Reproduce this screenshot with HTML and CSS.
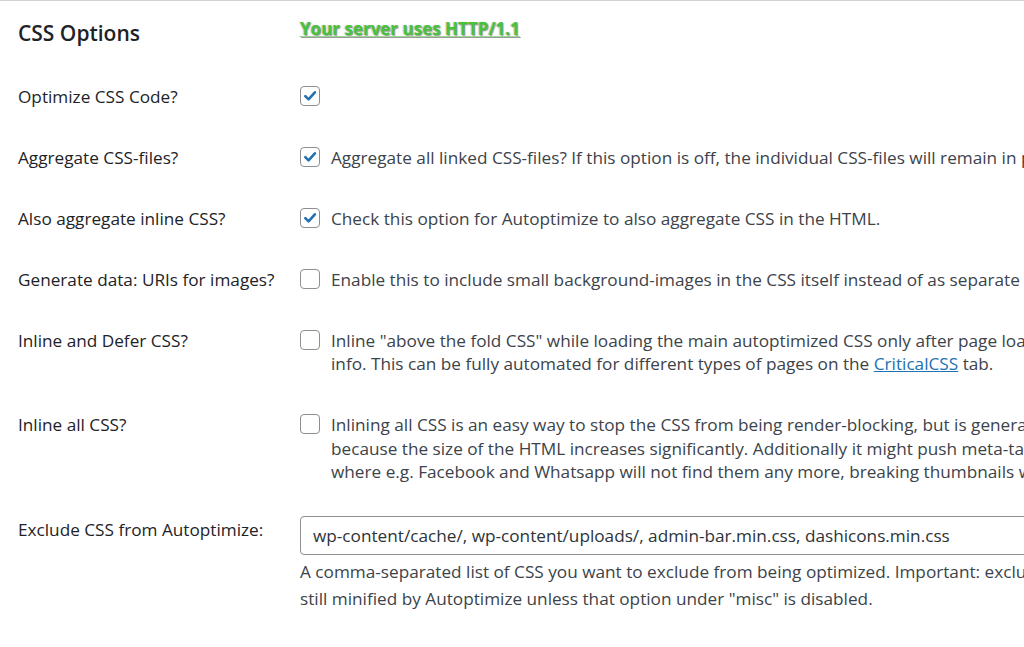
FILE: index.html
```html
<!DOCTYPE html>
<html lang="en">
<head>
<meta charset="utf-8">
<title>CSS Options</title>
<link rel="stylesheet" href="styles.css">
</head>
<body>
<div class="page">
  <div class="head-row">
    <h2 class="title">CSS Options</h2>
    <div class="proto"><span class="proto-link">Your server uses HTTP/1.1</span></div>
  </div>

  <div class="row">
    <div class="label">Optimize CSS Code?</div>
    <div class="field">
      <span class="cb checked"><svg viewBox="0 0 20 20"><path d="M4.8 10.2 8.4 13.8 15.4 5.9"/></svg></span>
    </div>
  </div>

  <div class="row">
    <div class="label">Aggregate CSS-files?</div>
    <div class="field">
      <span class="cb checked"><svg viewBox="0 0 20 20"><path d="M4.8 10.2 8.4 13.8 15.4 5.9"/></svg></span>
      <div class="text">Aggregate all linked CSS-files? If this option is off, the individual CSS-files will remain in place but will be minified.</div>
    </div>
  </div>

  <div class="row">
    <div class="label">Also aggregate inline CSS?</div>
    <div class="field">
      <span class="cb checked"><svg viewBox="0 0 20 20"><path d="M4.8 10.2 8.4 13.8 15.4 5.9"/></svg></span>
      <div class="text">Check this option for Autoptimize to also aggregate CSS in the HTML.</div>
    </div>
  </div>

  <div class="row">
    <div class="label">Generate data: URIs for images?</div>
    <div class="field">
      <span class="cb"></span>
      <div class="text">Enable this to include small background-images in the CSS itself instead of as separate downloads.</div>
    </div>
  </div>

  <div class="row">
    <div class="label">Inline and Defer CSS?</div>
    <div class="field">
      <span class="cb"></span>
      <div class="text">Inline "above the fold CSS" while loading the main autoptimized CSS only after page load. Check the FAQ for more<br>info. This can be fully automated for different types of pages on the <a class="link" href="#">CriticalCSS</a> tab.</div>
    </div>
  </div>

  <div class="row">
    <div class="label">Inline all CSS?</div>
    <div class="field">
      <span class="cb"></span>
      <div class="text">Inlining all CSS is an easy way to stop the CSS from being render-blocking, but is generally not recommended<br>because the size of the HTML increases significantly. Additionally it might push meta-tags down to a position<br>where e.g. Facebook and Whatsapp will not find them any more, breaking thumbnails when sharing.</div>
    </div>
  </div>

  <div class="row row-input">
    <div class="label">Exclude CSS from Autoptimize:</div>
    <div class="field-col">
      <div class="input">wp-content/cache/, wp-content/uploads/, admin-bar.min.css, dashicons.min.css</div>
      <p class="desc">A comma-separated list of CSS you want to exclude from being optimized. Important: excluded CSS files are<br>still minified by Autoptimize unless that option under "misc" is disabled.</p>
    </div>
  </div>
</div>
</body>
</html>
```

FILE: styles.css
```css
html, body {
  margin: 0;
  padding: 0;
  background: #ffffff;
  overflow: hidden;
}

body {
  font-family: "Open Sans", "Noto Sans", sans-serif;
  font-size: 17.2px;
  color: #3c434a;
  width: 1024px;
  height: 647px;
}

.page {
  border-top: 1px solid #d2d2d2;
  padding-left: 18px;
  width: 1600px;
}

.head-row {
  display: grid;
  grid-template-columns: 282px 1fr;
  align-items: start;
  padding-top: 14px;
  height: 51px;
}

.title {
  margin: 0;
  font-size: 21px;
  font-weight: 600;
  color: #1d2327;
  line-height: 36px;
}

.proto {
  padding-top: 2px;
}

.proto-link {
  display: inline-block;
  font-size: 17px;
  font-weight: 700;
  color: #47c33a;
  text-decoration: underline;
  text-decoration-color: #9bd98f;
  text-shadow: 1px 1px 1px #9a9a9a, -1px 0 1px #cfcfcf;
  line-height: 22px;
}

.row {
  display: grid;
  grid-template-columns: 282px 1fr;
  padding: 18.5px 0 19px;
  line-height: 23.5px;
}

.label {
  color: #1d2327;
  white-space: nowrap;
}

.field {
  display: flex;
  align-items: flex-start;
  gap: 11px;
}

.text {
  white-space: nowrap;
  color: #3c434a;
}

.cb {
  flex: none;
  box-sizing: border-box;
  width: 20px;
  height: 20px;
  margin-top: 1px;
  border: 1px solid #8c8f94;
  border-radius: 4px;
  background: #fff;
  display: flex;
  align-items: center;
  justify-content: center;
}

.cb svg {
  width: 18px;
  height: 18px;
}

.cb svg path {
  fill: none;
  stroke: #2271b1;
  stroke-width: 2.9;
  stroke-linecap: round;
  stroke-linejoin: round;
}

.link {
  color: #2271b1;
  text-decoration: underline;
}

.row-input {
  padding-top: 13px;
}

.row-input .label {
  padding-top: 2px;
}

.field-col {
  display: flex;
  flex-direction: column;
}

.input {
  box-sizing: border-box;
  width: 800px;
  height: 39px;
  border: 1px solid #8c8f94;
  border-radius: 4px;
  padding: 0 12px;
  line-height: 37px;
  color: #2c3338;
  white-space: nowrap;
}

.desc {
  margin: 3px 0 0;
  line-height: 27px;
  color: #3c434a;
  white-space: nowrap;
}
```
